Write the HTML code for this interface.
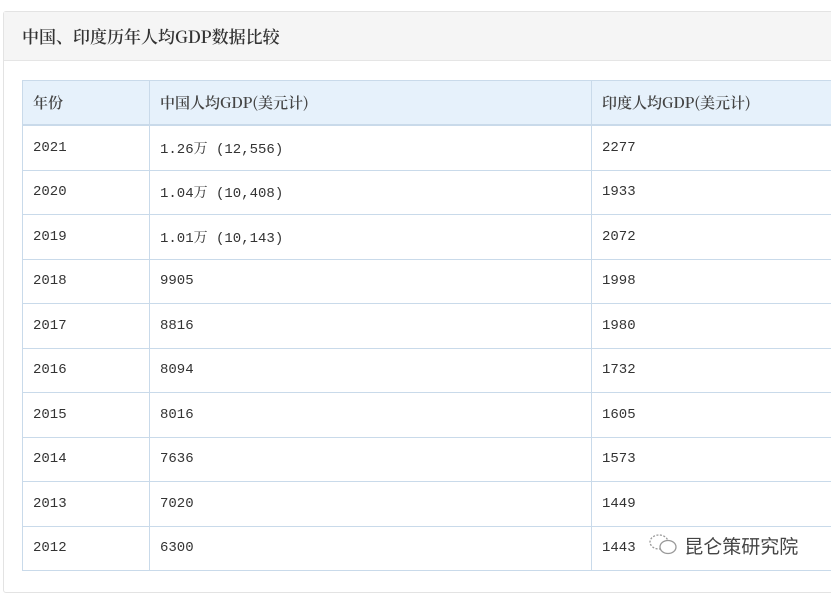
<!DOCTYPE html>
<html><head><meta charset="utf-8"><style>
body{margin:0;width:831px;height:580px;background:#fff;overflow:hidden;position:relative;font-family:"Liberation Mono","Noto Serif CJK SC",serif;color:#333}
.panel{position:absolute;left:3px;top:11px;width:840px;height:580px;border:1px solid #e3e3e3;border-radius:3px}
.hd{height:48px;background:#f5f5f5;border-bottom:1px solid #e5e5e5;font-size:17px;line-height:48px;padding-left:18px;color:#333;font-family:"Noto Serif CJK SC",serif;font-weight:600}
.r{position:absolute;left:22px;width:820px;border-left:1px solid #c9daea;border-bottom:1px solid #c9daea;box-sizing:border-box;font-size:14px}
.r div{position:absolute;top:0;height:100%;display:flex;align-items:center;padding-left:10px;box-sizing:border-box}
.c1{left:0;width:126px}.c2{left:126px;width:442px;border-left:1px solid #c9daea}.c3{left:568px;width:300px;border-left:1px solid #c9daea}
.h{background:#e6f1fb;font-family:"Noto Serif CJK SC",serif;font-weight:600;font-size:15px;color:#444;border-top:1px solid #c9daea;border-bottom:2px solid #c9daea}
.wm{position:absolute;left:648px;top:532px;font-family:"Noto Sans CJK SC",sans-serif;font-size:19px;color:#444}
</style></head><body>
<div class="panel"><div class="hd">中国、印度历年人均GDP数据比较</div></div>
<div class="r h" style="top:80px;height:46px"><div class="c1">年份</div><div class="c2">中国人均GDP(美元计)</div><div class="c3">印度人均GDP(美元计)</div></div>
<div class="r" style="top:126px;height:44.5px"><div class="c1">2021</div><div class="c2">1.26万 (12,556)</div><div class="c3">2277</div></div>
<div class="r" style="top:170.5px;height:44.5px"><div class="c1">2020</div><div class="c2">1.04万 (10,408)</div><div class="c3">1933</div></div>
<div class="r" style="top:215px;height:44.5px"><div class="c1">2019</div><div class="c2">1.01万 (10,143)</div><div class="c3">2072</div></div>
<div class="r" style="top:259.5px;height:44.5px"><div class="c1">2018</div><div class="c2">9905</div><div class="c3">1998</div></div>
<div class="r" style="top:304px;height:44.5px"><div class="c1">2017</div><div class="c2">8816</div><div class="c3">1980</div></div>
<div class="r" style="top:348.5px;height:44.5px"><div class="c1">2016</div><div class="c2">8094</div><div class="c3">1732</div></div>
<div class="r" style="top:393px;height:44.5px"><div class="c1">2015</div><div class="c2">8016</div><div class="c3">1605</div></div>
<div class="r" style="top:437.5px;height:44.5px"><div class="c1">2014</div><div class="c2">7636</div><div class="c3">1573</div></div>
<div class="r" style="top:482px;height:44.5px"><div class="c1">2013</div><div class="c2">7020</div><div class="c3">1449</div></div>
<div class="r" style="top:526.5px;height:44.5px"><div class="c1">2012</div><div class="c2">6300</div><div class="c3">1443</div></div>
<div class="wm"><svg width="32" height="26" viewBox="0 0 32 26" style="vertical-align:-5px"><ellipse cx="11" cy="10" rx="9" ry="7" fill="none" stroke="#999" stroke-width="1.3" stroke-dasharray="2 1.5"/><ellipse cx="20" cy="15" rx="8" ry="6.5" fill="#fff" stroke="#999" stroke-width="1.3"/></svg> 昆仑策研究院</div>
</body></html>
